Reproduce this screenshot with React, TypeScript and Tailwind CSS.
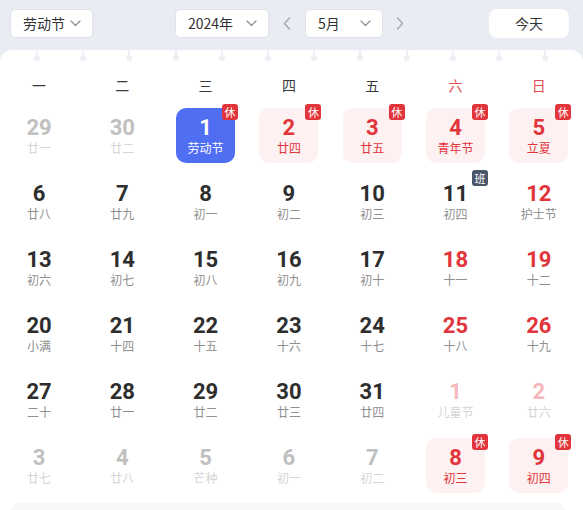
import React from "react";

type Day = {
  n: number;
  l: string;
  kind?: "faded" | "fadedRed" | "red" | "rest" | "sel";
  badge?: "休" | "班";
};

const rows: Day[][] = [
  [
    { n: 29, l: "廿一", kind: "faded" },
    { n: 30, l: "廿二", kind: "faded" },
    { n: 1, l: "劳动节", kind: "sel", badge: "休" },
    { n: 2, l: "廿四", kind: "rest", badge: "休" },
    { n: 3, l: "廿五", kind: "rest", badge: "休" },
    { n: 4, l: "青年节", kind: "rest", badge: "休" },
    { n: 5, l: "立夏", kind: "rest", badge: "休" },
  ],
  [
    { n: 6, l: "廿八" },
    { n: 7, l: "廿九" },
    { n: 8, l: "初一" },
    { n: 9, l: "初二" },
    { n: 10, l: "初三" },
    { n: 11, l: "初四", badge: "班" },
    { n: 12, l: "护士节", kind: "red" },
  ],
  [
    { n: 13, l: "初六" },
    { n: 14, l: "初七" },
    { n: 15, l: "初八" },
    { n: 16, l: "初九" },
    { n: 17, l: "初十" },
    { n: 18, l: "十一", kind: "red" },
    { n: 19, l: "十二", kind: "red" },
  ],
  [
    { n: 20, l: "小满" },
    { n: 21, l: "十四" },
    { n: 22, l: "十五" },
    { n: 23, l: "十六" },
    { n: 24, l: "十七" },
    { n: 25, l: "十八", kind: "red" },
    { n: 26, l: "十九", kind: "red" },
  ],
  [
    { n: 27, l: "二十" },
    { n: 28, l: "廿一" },
    { n: 29, l: "廿二" },
    { n: 30, l: "廿三" },
    { n: 31, l: "廿四" },
    { n: 1, l: "儿童节", kind: "fadedRed" },
    { n: 2, l: "廿六", kind: "fadedRed" },
  ],
  [
    { n: 3, l: "廿七", kind: "faded" },
    { n: 4, l: "廿八", kind: "faded" },
    { n: 5, l: "芒种", kind: "faded" },
    { n: 6, l: "初一", kind: "faded" },
    { n: 7, l: "初二", kind: "faded" },
    { n: 8, l: "初三", kind: "rest", badge: "休" },
    { n: 9, l: "初四", kind: "rest", badge: "休" },
  ],
];

const weekdays = ["一", "二", "三", "四", "五", "六", "日"];

const Chevron = () => (
  <svg width="11" height="7" viewBox="0 0 11 7" fill="none">
    <path d="M1 1l4.5 4.5L10 1" stroke="#8a8d94" strokeWidth="1.2" strokeLinecap="round" strokeLinejoin="round" />
  </svg>
);

const Arrow = ({ dir }: { dir: "l" | "r" }) => (
  <svg width="8" height="13" viewBox="0 0 8 13" fill="none">
    <path
      d={dir === "l" ? "M6.5 1L1.5 6.5 6.5 12" : "M1.5 1l5 5.5-5 5.5"}
      stroke="#a4a7ae"
      strokeWidth="1.4"
      strokeLinecap="round"
      strokeLinejoin="round"
    />
  </svg>
);

function Cell({ d }: { d: Day }) {
  let box = "";
  let num = "text-[#2e2e2e]";
  let lunar = "text-[#8f8f8f]";
  if (d.kind === "sel") {
    box = "bg-[#4f6ef2]";
    num = "text-white";
    lunar = "text-white";
  } else if (d.kind === "rest") {
    box = "bg-[#fdf1f1]";
    num = "text-[#e2353b]";
    lunar = "text-[#e2353b]";
  } else if (d.kind === "red") {
    num = "text-[#e2353b]";
  } else if (d.kind === "faded") {
    num = "text-[#c0c0c0]";
    lunar = "text-[#d5d5d5]";
  } else if (d.kind === "fadedRed") {
    num = "text-[#f5b8ba]";
    lunar = "text-[#d5d5d5]";
  }
  return (
    <div className={`relative h-[55px] rounded-[10px] flex flex-col items-center pt-[8px] ${box}`}>
      <div
        className={`h-[24px] leading-[24px] text-[22px] font-bold ${num}`}
        style={{ fontFamily: "Roboto, 'DejaVu Sans', sans-serif" }}
      >
        {d.n}
      </div>
      <div className={`h-[16px] leading-[16px] text-[12px] ${lunar}`}>{d.l}</div>
      {d.badge && (
        <div
          className={`absolute -top-[4px] -right-[3px] w-[16px] h-[16px] rounded-[3px] flex items-center justify-center text-[11px] leading-none text-white ${
            d.badge === "休" ? "bg-[#e2353b]" : "bg-[#4b5568]"
          }`}
        >
          {d.badge}
        </div>
      )}
    </div>
  );
}

export default function App() {
  return (
    <div
      className="w-[583px] h-[510px] overflow-hidden bg-[#e9ecf3] flex flex-col"
      style={{ fontFamily: "'Noto Sans CJK SC', 'Noto Sans', sans-serif" }}
    >
      <div className="h-[50px] flex items-center justify-between pl-[10px] pr-[14px] pb-[4px] shrink-0">
        <div className="w-[83px] h-[29px] bg-white rounded-[5px] border border-[#dfe2e8] flex items-center justify-between pl-[12px] pr-[11px] text-[14px] text-[#333]">
          <span>劳动节</span>
          <Chevron />
        </div>
        <div className="flex items-center">
          <div className="w-[94px] h-[29px] bg-white rounded-[5px] border border-[#dfe2e8] flex items-center justify-between pl-[12px] pr-[11px] text-[14px] text-[#333]">
            <span>2024年</span>
            <Chevron />
          </div>
          <div className="w-[36px] flex justify-center">
            <Arrow dir="l" />
          </div>
          <div className="w-[78px] h-[29px] bg-white rounded-[5px] border border-[#dfe2e8] flex items-center justify-between pl-[12px] pr-[11px] text-[14px] text-[#333]">
            <span>5月</span>
            <Chevron />
          </div>
          <div className="w-[24px] flex justify-end pr-[3px]">
            <Arrow dir="r" />
          </div>
        </div>
        <div className="w-[80px] h-[29px] bg-white rounded-[8px] flex items-center justify-center text-[14px] text-[#333]">
          今天
        </div>
      </div>

      <div className="relative flex-1 bg-white rounded-t-[12px]">
        <div className="absolute top-0 left-[34px] flex gap-[40.2px]">
          {Array.from({ length: 12 }).map((_, i) => (
            <div key={i} className="flex flex-col items-center w-[6px]">
              <div className="w-[2px] h-[6px] bg-[#eef0f5]" />
              <div className="w-[6px] h-[6px] -mt-[1px] rounded-full bg-[#eef0f5]" />
            </div>
          ))}
        </div>

        <div className="pl-[9.5px] pt-[24px]">
          <div className="grid grid-cols-[repeat(7,59px)] gap-x-[24.3px]">
            {weekdays.map((w, i) => (
              <div
                key={w}
                className={`h-[22px] leading-[22px] text-center text-[14px] ${i >= 5 ? "text-[#e04a50]" : "text-[#3a3a3a]"}`}
              >
                {w}
              </div>
            ))}
          </div>
          <div className="grid grid-cols-[repeat(7,59px)] gap-x-[24.3px] gap-y-[11px] mt-[12px]">
            {rows.flat().map((d, i) => (
              <Cell key={i} d={d} />
            ))}
          </div>
        </div>

        <div className="absolute left-[10px] right-[17px] top-[453px] h-[20px] rounded-t-[10px] bg-[#f6f7f9]" />
      </div>
    </div>
  );
}
